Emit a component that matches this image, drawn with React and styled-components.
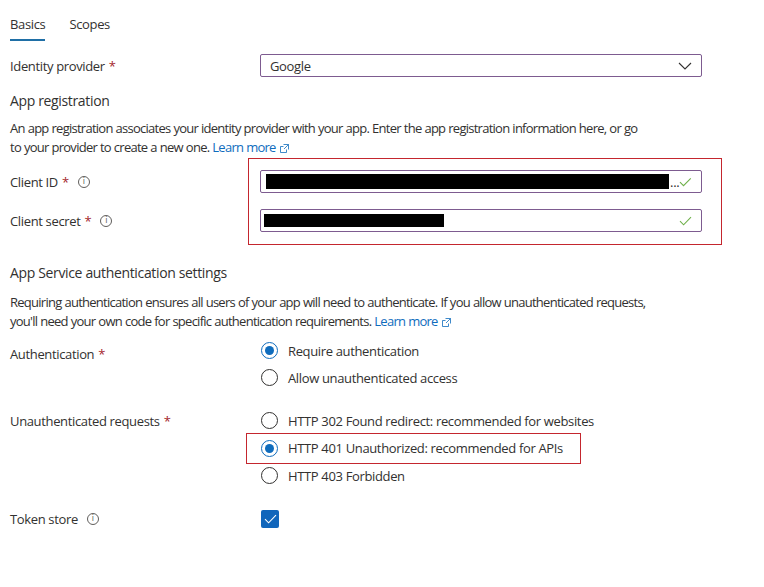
import React from "react";
import styled, { createGlobalStyle, css } from "styled-components";

const Global = createGlobalStyle`
  html, body { margin: 0; padding: 0; background: #fff; }
  body {
    font-family: "Open Sans", "Noto Sans", sans-serif;
    font-size: 13px;
    color: #323130;
    letter-spacing: -0.35px;
  }
`;

const Page = styled.div`
  padding: 0 10px;
  width: 744px;
`;

const Tabs = styled.div`
  display: flex;
  gap: 24px;
  height: 41px;
`;

const Tab = styled.div`
  box-sizing: border-box;
  padding-top: 15px;
  height: 41px;
  font-size: 13px;
  color: #323130;
  ${(p) =>
    p.$active &&
    css`
      border-bottom: 2px solid #1f6fa6;
    `}
`;

const Row = styled.div`
  display: grid;
  grid-template-columns: 250px 442px;
  align-items: center;
  margin-top: ${(p) => p.$mt || 0}px;
`;

const Label = styled.div`
  display: flex;
  align-items: center;
  align-self: ${(p) => (p.$top ? "start" : "center")};
  padding-top: ${(p) => p.$pt || 0}px;
  white-space: nowrap;
`;

const Star = styled.span`
  color: #a4262c;
  margin-left: 4px;
`;

const Info = styled.span`
  display: inline-flex;
  align-items: center;
  justify-content: center;
  box-sizing: border-box;
  width: 12px;
  height: 12px;
  border: 1px solid #605e5c;
  border-radius: 50%;
  margin-left: 9px;
  font-size: 8px;
  line-height: 1;
  color: #605e5c;
  font-family: "DejaVu Sans", sans-serif;
  letter-spacing: 0;
`;

const Field = styled.div`
  box-sizing: border-box;
  height: 23px;
  border: 1px solid #7d5b90;
  border-radius: 2px;
  display: flex;
  align-items: center;
  padding: 0 9px 0 9px;
  position: relative;
`;

const FieldText = styled.span`
  flex: 1;
  white-space: nowrap;
`;

const Redact = styled.span`
  display: block;
  background: #000;
  height: ${(p) => p.$h}px;
  width: ${(p) => p.$w}px;
  margin-left: ${(p) => p.$ml}px;
`;

const Ellipsis = styled.span`
  color: #323130;
  margin-left: 1px;
`;

const Spacer = styled.span`
  flex: 1;
`;

const Heading = styled.div`
  font-size: 14px;
  margin-top: ${(p) => p.$mt}px;
  line-height: 20px;
  color: #323130;
`;

const Para = styled.p`
  margin: ${(p) => p.$mt}px 0 0;
  line-height: 19px;
  width: ${(p) => p.$w}px;
  letter-spacing: -0.74px;
  word-spacing: 0.3px;
`;

const Link = styled.a`
  color: #0f6cbd;
  text-decoration: none;
  svg {
    margin-left: 4px;
    vertical-align: -1px;
  }
`;

const Highlight = styled.div`
  position: relative;
  &::after {
    content: "";
    position: absolute;
    pointer-events: none;
    border: 1px solid #c4262e;
    top: ${(p) => p.$t}px;
    bottom: ${(p) => p.$b}px;
    left: ${(p) => p.$l}px;
    right: ${(p) => p.$r}px;
  }
`;

const Stack = styled.div`
  display: flex;
  flex-direction: column;
`;

const RadioRow = styled.label`
  display: flex;
  align-items: center;
  gap: 10px;
  height: ${(p) => p.$h || 27}px;
  padding-left: 1px;
  white-space: nowrap;
`;

const RadioCircle = styled.span`
  box-sizing: border-box;
  width: 17px;
  height: 17px;
  border-radius: 50%;
  border: 1px solid ${(p) => (p.$checked ? "#0f6cbd" : "#323130")};
  display: inline-flex;
  align-items: center;
  justify-content: center;
  &::after {
    content: "";
    width: 9px;
    height: 9px;
    border-radius: 50%;
    background: ${(p) => (p.$checked ? "#0f6cbd" : "transparent")};
  }
`;

const CheckBox = styled.span`
  display: inline-flex;
  align-items: center;
  justify-content: center;
  width: 18px;
  height: 18px;
  border-radius: 2px;
  background: #1166bb;
  margin-left: 1px;
`;

const Chevron = () => (
  <svg width="14" height="8" viewBox="0 0 14 8" fill="none">
    <path d="M1 1l6 6 6-6" stroke="#323130" strokeWidth="1.1" />
  </svg>
);

const Check = ({ color = "#6fb04a" }) => (
  <svg width="13" height="10" viewBox="0 0 13 10" fill="none">
    <path d="M1 5.2l3.6 3.6L12 1.2" stroke={color} strokeWidth="1.1" />
  </svg>
);

const ExtIcon = () => (
  <svg width="9" height="9" viewBox="0 0 9 9" fill="none">
    <path d="M3.5 0.5h5v5M8.5 0.5L4 5M6.5 5.5v3h-6v-6h3" stroke="#0f6cbd" strokeWidth="0.8" />
  </svg>
);

const Radio = ({ checked, children, h }) => (
  <RadioRow $h={h}>
    <RadioCircle $checked={checked} />
    <span>{children}</span>
  </RadioRow>
);

export default function App() {
  return (
    <>
      <Global />
      <Page>
        <Tabs>
          <Tab $active>Basics</Tab>
          <Tab>Scopes</Tab>
        </Tabs>

        <Row $mt={13}>
          <Label>
            Identity provider<Star>*</Star>
          </Label>
          <Field>
            <FieldText>Google</FieldText>
            <Chevron />
          </Field>
        </Row>

        <Heading $mt={14}>App registration</Heading>
        <Para $mt={8} $w={634}>
          An app registration associates your identity provider with your app. Enter the app
          registration information here, or go to your provider to create a new one.{" "}
          <Link href="#">
            Learn more
            <ExtIcon />
          </Link>
        </Para>

        <Highlight $t={-12} $b={-13} $l={238} $r={32}>
          <Row $mt={13}>
            <Label>
              Client ID<Star>*</Star>
              <Info>i</Info>
            </Label>
            <Field>
              <Redact $w={412} $h={15} $ml={-4} />
              <Ellipsis>...</Ellipsis>
              <Spacer />
              <Check />
            </Field>
          </Row>
          <Row $mt={16}>
            <Label>
              Client secret<Star>*</Star>
              <Info>i</Info>
            </Label>
            <Field>
              <Redact $w={180} $h={13} $ml={-6} />
              <Spacer />
              <Check />
            </Field>
          </Row>
        </Highlight>

        <Heading $mt={31}>App Service authentication settings</Heading>
        <Para $mt={10} $w={660}>
          Requiring authentication ensures all users of your app will need to authenticate. If you
          allow unauthenticated requests, you'll need your own code for specific authentication
          requirements.{" "}
          <Link href="#">
            Learn more
            <ExtIcon />
          </Link>
        </Para>

        <Row $mt={6}>
          <Label $top $pt={8}>
            Authentication<Star>*</Star>
          </Label>
          <Stack>
            <Radio checked>Require authentication</Radio>
            <Radio>Allow unauthenticated access</Radio>
          </Stack>
        </Row>

        <Row $mt={16}>
          <Label $top $pt={5}>
            Unauthenticated requests<Star>*</Star>
          </Label>
          <Stack>
            <Radio>HTTP 302 Found redirect: recommended for websites</Radio>
            <Highlight $t={-1} $b={-2} $l={-14} $r={121}>
              <Radio checked h={28}>
                HTTP 401 Unauthorized: recommended for APIs
              </Radio>
            </Highlight>
            <Radio>HTTP 403 Forbidden</Radio>
          </Stack>
        </Row>

        <Row $mt={21}>
          <Label>
            Token store
            <Info>i</Info>
          </Label>
          <div>
            <CheckBox>
              <Check color="#fff" />
            </CheckBox>
          </div>
        </Row>
      </Page>
    </>
  );
}
